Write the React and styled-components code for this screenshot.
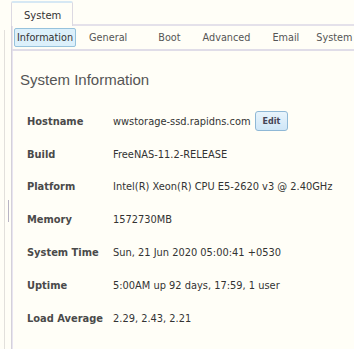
import React from "react";
import styled, { createGlobalStyle } from "styled-components";

const Global = createGlobalStyle`
  html, body { margin: 0; padding: 0; background: #fffef7; }
  body { font-family: "DejaVu Sans", Verdana, sans-serif; }
`;

const Page = styled.div`
  display: flex;
  height: 349px;
  width: 354px;
  overflow: hidden;
  background: #fffef7;
`;

const Rail = styled.div`
  width: 4px;
  margin-top: 30px;
  border-right: 1px solid #e2e0dc;
`;

const Splitter = styled.div`
  width: 6px;
  position: relative;
`;

const Grip = styled.div`
  position: absolute;
  left: 3px;
  top: 200px;
  width: 1px;
  height: 22px;
  background: #b8b4c4;
`;

const Panel = styled.div`
  flex: 1;
  display: flex;
  flex-direction: column;
  min-width: 0;
`;

const TabStrip = styled.div`
  display: flex;
  height: 26px;
  box-sizing: border-box;
  padding-top: 1px;
`;

const Tab = styled.div`
  width: 62px;
  box-sizing: border-box;
  border: 1px solid #dcd9e2;
  border-top: 2px solid #d6e8f4;
  border-bottom: none;
  border-radius: 2px 2px 0 0;
  font-size: 10px;
  color: #333;
  padding: 7px 0 0 12px;
`;

const StripFill = styled.div`
  flex: 1;
  border-bottom: 2px solid #e4e1ea;
`;

const Body = styled.div`
  flex: 1;
  border-left: 1px solid #d4d1da;
  box-shadow: inset 1px 0 0 #e8e4f0;
`;

const SubBar = styled.div`
  display: flex;
  align-items: center;
  height: 25px;
  box-sizing: border-box;
  padding-left: 2px;
  border-bottom: 2px solid #e0dde8;
  white-space: nowrap;
`;

const SubTab = styled.div`
  font-size: 9.7px;
  color: ${p => (p.active ? "#333" : "#555")};
  padding: 3px 2px;
  margin-right: ${p => p.gap}px;
  border: 1px solid ${p => (p.active ? "#96c2dc" : "transparent")};
  border-radius: 2px;
  background: ${p => (p.active ? "#dcf0fb" : "transparent")};
`;

const Content = styled.div`
  padding: 20px 0 0 8px;
`;

const Title = styled.div`
  font-family: "Liberation Sans", Arial, sans-serif;
  font-size: 15px;
  color: #555;
  margin-bottom: 17px;
`;

const Table = styled.div`
  display: grid;
  grid-template-columns: 86px auto;
  grid-auto-rows: 32.8px;
  padding-left: 7px;
`;

const Label = styled.div`
  font-size: 9.9px;
  font-weight: bold;
  color: #4a4a4a;
  display: flex;
  align-items: center;
  white-space: nowrap;
`;

const Value = styled.div`
  font-size: 9.85px;
  color: #333;
  display: flex;
  align-items: center;
  white-space: nowrap;
  gap: 4px;
`;

const EditButton = styled.button`
  font-family: "DejaVu Sans", Verdana, sans-serif;
  font-size: 8px;
  font-weight: bold;
  color: #445;
  height: 20px;
  padding: 0 7px;
  border: 1px solid #8fb8d6;
  border-radius: 3px;
  background: linear-gradient(#e8f4fc, #cfe6f7);
`;

const rows = [
  ["Hostname", "wwstorage-ssd.rapidns.com", true],
  ["Build", "FreeNAS-11.2-RELEASE"],
  ["Platform", "Intel(R) Xeon(R) CPU E5-2620 v3 @ 2.40GHz"],
  ["Memory", "1572730MB"],
  ["System Time", "Sun, 21 Jun 2020 05:00:41 +0530"],
  ["Uptime", "5:00AM up 92 days, 17:59, 1 user"],
  ["Load Average", "2.29, 2.43, 2.21"],
];

const subtabs = [
  ["Information", 10],
  ["General", 25],
  ["Boot", 16],
  ["Advanced", 16],
  ["Email", 11],
  ["System", 0],
];

export default function App() {
  return (
    <Page>
      <Global />
      <Rail />
      <Splitter>
        <Grip />
      </Splitter>
      <Panel>
        <TabStrip>
          <Tab>System</Tab>
          <StripFill />
        </TabStrip>
        <Body>
          <SubBar>
            {subtabs.map(([name, gap], i) => (
              <SubTab key={name} active={i === 0} gap={gap}>
                {name}
              </SubTab>
            ))}
          </SubBar>
          <Content>
            <Title>System Information</Title>
            <Table>
              {rows.map(([k, v, edit]) => (
                <React.Fragment key={k}>
                  <Label>{k}</Label>
                  <Value>
                    {v}
                    {edit && <EditButton>Edit</EditButton>}
                  </Value>
                </React.Fragment>
              ))}
            </Table>
          </Content>
        </Body>
      </Panel>
    </Page>
  );
}
